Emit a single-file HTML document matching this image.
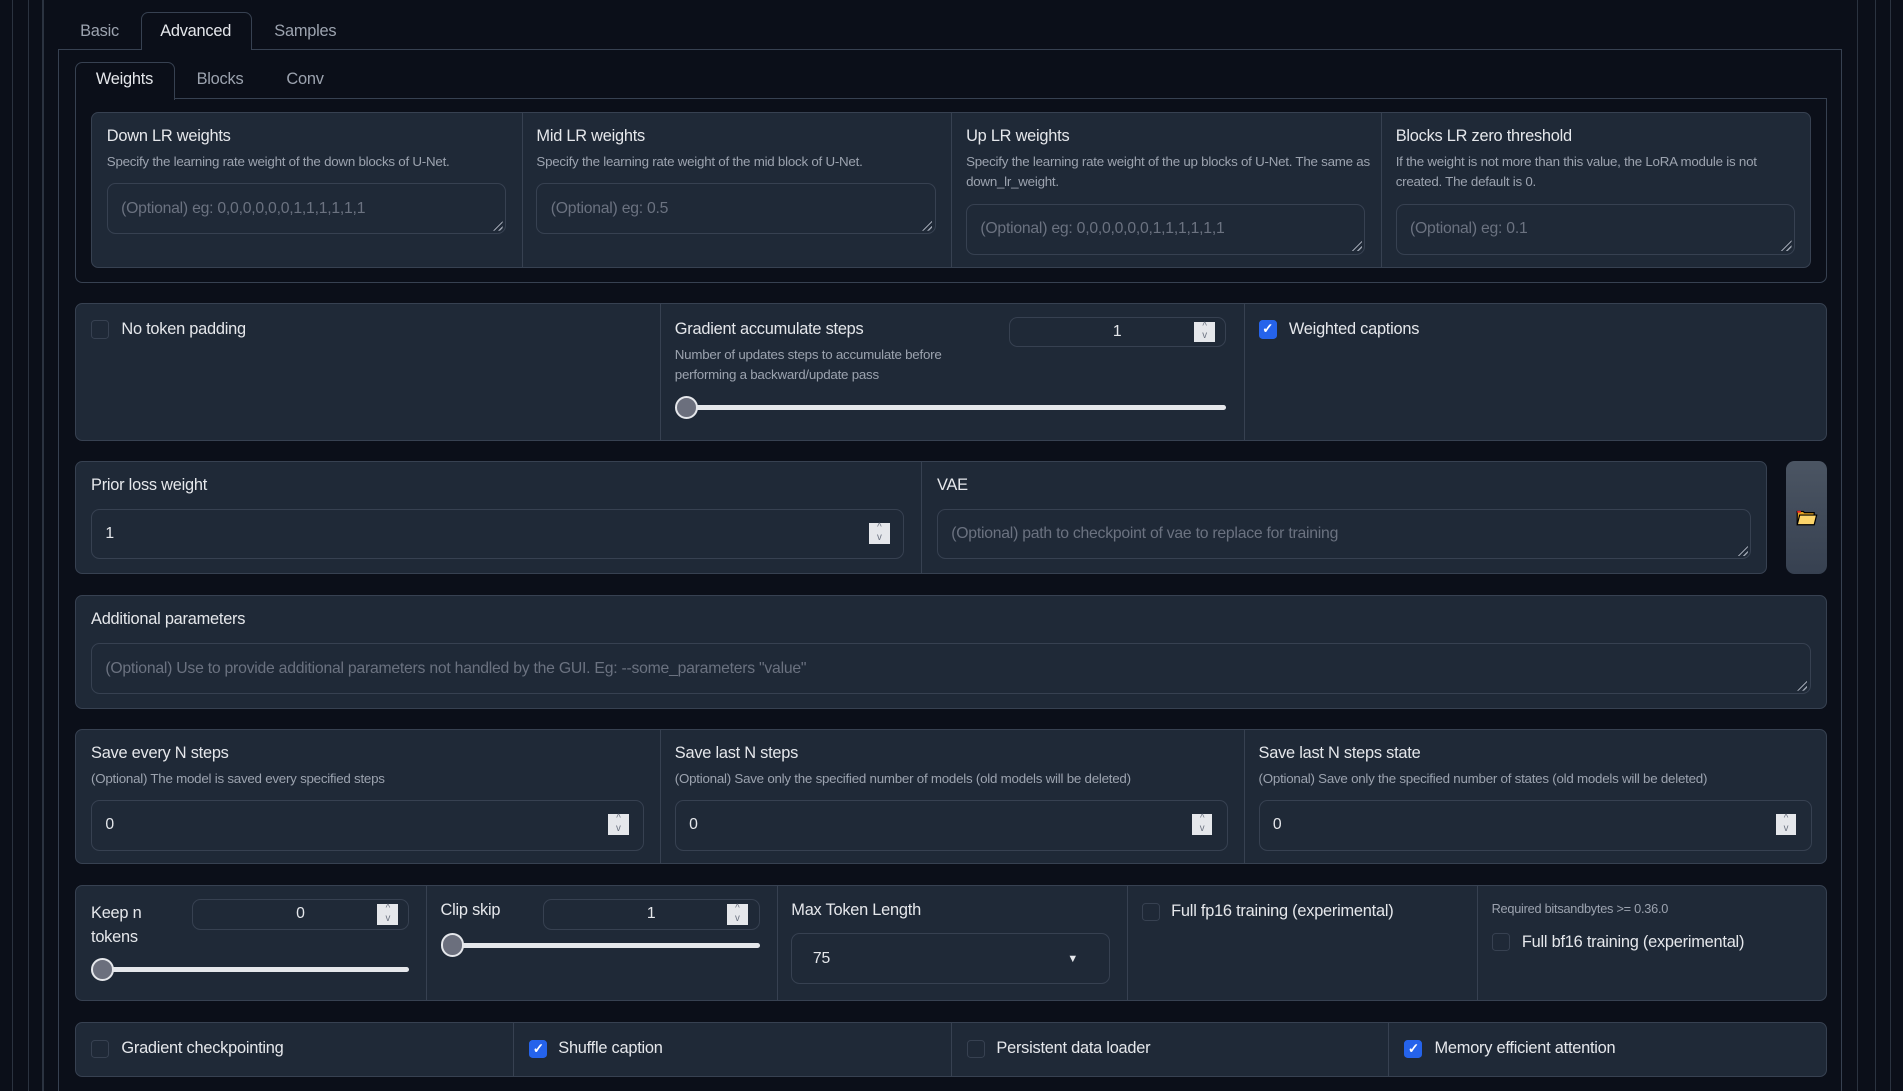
<!DOCTYPE html>
<html><head><meta charset="utf-8">
<style>
html,body{margin:0;padding:0;background:#0b0f19;overflow:hidden}
html{width:1903px;height:1091px}
#r{position:relative;width:1568px;height:899px;zoom:1.21365;font-family:"Liberation Sans",sans-serif;color:#e5e7eb;font-size:13px;letter-spacing:-0.2px}
.a{position:absolute}
.vl{position:absolute;top:0;height:899px;width:1px;background:#2b3340}
.p{position:absolute;background:#1f2937;border:1px solid #374151;border-radius:6px;box-sizing:border-box}
.sep{position:absolute;top:0;bottom:0;width:1px;background:#374151}
.t{position:absolute;font-size:13.5px;color:#e5e7eb;white-space:nowrap}
.d{position:absolute;font-size:11px;color:#9ca3af;line-height:17px}
.in{position:absolute;border:1px solid #374151;border-radius:7px;box-sizing:border-box;background:#1f2937;color:#6b7280;font-size:13px;padding-left:11px;display:flex;align-items:center;white-space:nowrap;overflow:hidden}
.in.v{color:#e5e7eb}
.rz{position:absolute;right:2px;bottom:2px;width:10px;height:10px;background:repeating-linear-gradient(135deg,transparent 0 2px,#9ca3af 2px 3px);clip-path:polygon(100% 0,100% 100%,0 100%)}
.sp{position:absolute;width:17px;height:17px;background:#e5e7eb;color:#6b7280;font-size:8px;line-height:8px;text-align:center}
.tr{position:absolute;height:4px;background:#e5e7eb;border-radius:2px}
.th{position:absolute;width:16px;height:16px;border-radius:50%;background:#6b6f7d;border:2px solid #e5e7eb}
.cb{position:absolute;width:15px;height:15px;border:1px solid #374151;border-radius:3px;box-sizing:border-box;background:#1f2937}
.cb.on{background:#2563eb;border-color:#2563eb;color:#fff;font-size:11px;line-height:14px;text-align:center;font-weight:bold}
</style></head><body><div id="r">
<div class="vl" style="left:10px"></div><div class="vl" style="left:23px"></div><div class="vl" style="left:35px"></div>
<div class="vl" style="left:1530px"></div><div class="vl" style="left:1545px"></div><div class="vl" style="left:1557px"></div>
<!-- outer tab container -->
<div class="a" style="left:48px;top:40px;width:1470px;height:880px;border:1px solid #374151;border-bottom:none;box-sizing:border-box"></div>
<div class="a" style="left:116px;top:10px;width:92px;height:31px;border:1px solid #374151;border-bottom:none;border-radius:6px 6px 0 0;background:#0b0f19;box-sizing:border-box"></div>
<div class="t" style="left:66px;top:18px;color:#9ca3af">Basic</div>
<div class="t" style="left:132px;top:18px">Advanced</div>
<div class="t" style="left:226px;top:18px;color:#9ca3af">Samples</div>
<!-- inner tabs -->
<div class="a" style="left:62px;top:81px;width:1443px;height:152px;border:1px solid #374151;border-radius:0 0 6px 6px;box-sizing:border-box"></div>
<div class="a" style="left:62px;top:51px;width:82px;height:31px;border:1px solid #374151;border-bottom:none;border-radius:6px 6px 0 0;background:#0b0f19;box-sizing:border-box"></div>
<div class="t" style="left:79px;top:58px">Weights</div>
<div class="t" style="left:162px;top:58px;color:#9ca3af">Blocks</div>
<div class="t" style="left:236px;top:58px;color:#9ca3af">Conv</div>
<!-- LR weights block -->
<div class="p" style="left:75px;top:92px;width:1417px;height:129px">
 <div class="sep" style="left:354px"></div><div class="sep" style="left:708px"></div><div class="sep" style="left:1062px"></div>
</div>
<div class="t" style="left:88px;top:105px">Down LR weights</div>
<div class="d" style="left:88px;top:125px">Specify the learning rate weight of the down blocks of U-Net.</div>
<div class="in" style="left:88px;top:151px;width:329px;height:42px">(Optional) eg: 0,0,0,0,0,0,1,1,1,1,1,1<div class="rz"></div></div>
<div class="t" style="left:442px;top:105px">Mid LR weights</div>
<div class="d" style="left:442px;top:125px">Specify the learning rate weight of the mid block of U-Net.</div>
<div class="in" style="left:442px;top:151px;width:329px;height:42px">(Optional) eg: 0.5<div class="rz"></div></div>
<div class="t" style="left:796px;top:105px">Up LR weights</div>
<div class="d" style="left:796px;top:125px;width:335px">Specify the learning rate weight of the up blocks of U-Net. The same as down_lr_weight.</div>
<div class="in" style="left:796px;top:168px;width:329px;height:42px">(Optional) eg: 0,0,0,0,0,0,1,1,1,1,1,1<div class="rz"></div></div>
<div class="t" style="left:1150px;top:105px">Blocks LR zero threshold</div>
<div class="d" style="left:1150px;top:125px;width:335px">If the weight is not more than this value, the LoRA module is not created. The default is 0.</div>
<div class="in" style="left:1150px;top:168px;width:329px;height:42px">(Optional) eg: 0.1<div class="rz"></div></div>
<!-- row 2 -->
<div class="p" style="left:62px;top:250px;width:1443px;height:113px"><div class="sep" style="left:481px"></div><div class="sep" style="left:962px"></div></div>
<div class="cb" style="left:75px;top:264px"></div><div class="t" style="left:100px;top:264px">No token padding</div>
<div class="t" style="left:556px;top:264px">Gradient accumulate steps</div>
<div class="d" style="left:556px;top:284px;width:270px">Number of updates steps to accumulate before performing a backward/update pass</div>
<div class="in v" style="left:831px;top:261px;width:179px;height:25px;justify-content:center;padding:0">1</div>
<div class="sp" style="left:984px;top:265px">^<br>v</div>
<div class="tr" style="left:560px;top:334px;width:450px"></div><div class="th" style="left:556px;top:326px"></div>
<div class="cb on" style="left:1037px;top:264px">✓</div><div class="t" style="left:1062px;top:264px">Weighted captions</div>
<!-- row 3 -->
<div class="p" style="left:62px;top:380px;width:1394px;height:93px"><div class="sep" style="left:696px"></div></div>
<div class="t" style="left:75px;top:392px">Prior loss weight</div>
<div class="in v" style="left:75px;top:419px;width:670px;height:42px">1</div>
<div class="sp" style="left:716px;top:431px">^<br>v</div>
<div class="t" style="left:772px;top:392px">VAE</div>
<div class="in" style="left:772px;top:419px;width:671px;height:42px">(Optional) path to checkpoint of vae to replace for training<div class="rz"></div></div>
<div class="a" style="left:1472px;top:380px;width:33px;height:93px;border-radius:7px;background:linear-gradient(#4b5563,#374151)"></div>
<svg class="a" style="left:1480px;top:419px" width="18" height="14" viewBox="0 0 18 14"><path d="M1 2h5l1 1h8v9H1z" fill="#e0a020" stroke="#000"/><path d="M3 5h14l-2 8H1z" fill="#fcd46a" stroke="#000"/><rect x="1" y="1.5" width="3" height="1.5" fill="#e22"/></svg>
<!-- additional -->
<div class="p" style="left:62px;top:490px;width:1443px;height:94px"></div>
<div class="t" style="left:75px;top:503px">Additional parameters</div>
<div class="in" style="left:75px;top:530px;width:1417px;height:42px">(Optional) Use to provide additional parameters not handled by the GUI. Eg: --some_parameters "value"<div class="rz"></div></div>
<!-- save row -->
<div class="p" style="left:62px;top:601px;width:1443px;height:111px"><div class="sep" style="left:481px"></div><div class="sep" style="left:962px"></div></div>
<div class="t" style="left:75px;top:613px">Save every N steps</div>
<div class="d" style="left:75px;top:634px">(Optional) The model is saved every specified steps</div>
<div class="in v" style="left:75px;top:659px;width:456px;height:42px">0</div><div class="sp" style="left:501px;top:671px">^<br>v</div>
<div class="t" style="left:556px;top:613px">Save last N steps</div>
<div class="d" style="left:556px;top:634px">(Optional) Save only the specified number of models (old models will be deleted)</div>
<div class="in v" style="left:556px;top:659px;width:456px;height:42px">0</div><div class="sp" style="left:982px;top:671px">^<br>v</div>
<div class="t" style="left:1037px;top:613px">Save last N steps state</div>
<div class="d" style="left:1037px;top:634px">(Optional) Save only the specified number of states (old models will be deleted)</div>
<div class="in v" style="left:1037px;top:659px;width:456px;height:42px">0</div><div class="sp" style="left:1463px;top:671px">^<br>v</div>
<!-- row 5 -->
<div class="p" style="left:62px;top:729px;width:1443px;height:96px"><div class="sep" style="left:288px"></div><div class="sep" style="left:577px"></div><div class="sep" style="left:866px"></div><div class="sep" style="left:1154px"></div></div>
<div class="t" style="left:75px;top:742px;line-height:20px">Keep n<br>tokens</div>
<div class="in v" style="left:158px;top:741px;width:179px;height:25px;justify-content:center;padding:0">0</div><div class="sp" style="left:311px;top:745px">^<br>v</div>
<div class="tr" style="left:80px;top:797px;width:257px"></div><div class="th" style="left:75px;top:789px"></div>
<div class="t" style="left:363px;top:742px">Clip skip</div>
<div class="in v" style="left:447px;top:741px;width:179px;height:25px;justify-content:center;padding:0">1</div><div class="sp" style="left:599px;top:745px">^<br>v</div>
<div class="tr" style="left:368px;top:777px;width:258px"></div><div class="th" style="left:363px;top:769px"></div>
<div class="t" style="left:652px;top:742px">Max Token Length</div>
<div class="in v" style="left:652px;top:769px;width:263px;height:42px;padding-left:17px">75<span style="position:absolute;right:26px;font-size:9px">▼</span></div>
<div class="cb" style="left:941px;top:744px"></div><div class="t" style="left:965px;top:743px">Full fp16 training (experimental)</div>
<div class="d" style="left:1229px;top:741px;font-size:10.5px">Required bitsandbytes &gt;= 0.36.0</div>
<div class="cb" style="left:1229px;top:769px"></div><div class="t" style="left:1254px;top:769px">Full bf16 training (experimental)</div>
<!-- row 6 -->
<div class="p" style="left:62px;top:842px;width:1443px;height:45px"><div class="sep" style="left:360px"></div><div class="sep" style="left:721px"></div><div class="sep" style="left:1081px"></div></div>
<div class="cb" style="left:75px;top:857px"></div><div class="t" style="left:100px;top:856px">Gradient checkpointing</div>
<div class="cb on" style="left:436px;top:857px">✓</div><div class="t" style="left:460px;top:856px">Shuffle caption</div>
<div class="cb" style="left:797px;top:857px"></div><div class="t" style="left:821px;top:856px">Persistent data loader</div>
<div class="cb on" style="left:1157px;top:857px">✓</div><div class="t" style="left:1182px;top:856px">Memory efficient attention</div>
</div></body></html>
